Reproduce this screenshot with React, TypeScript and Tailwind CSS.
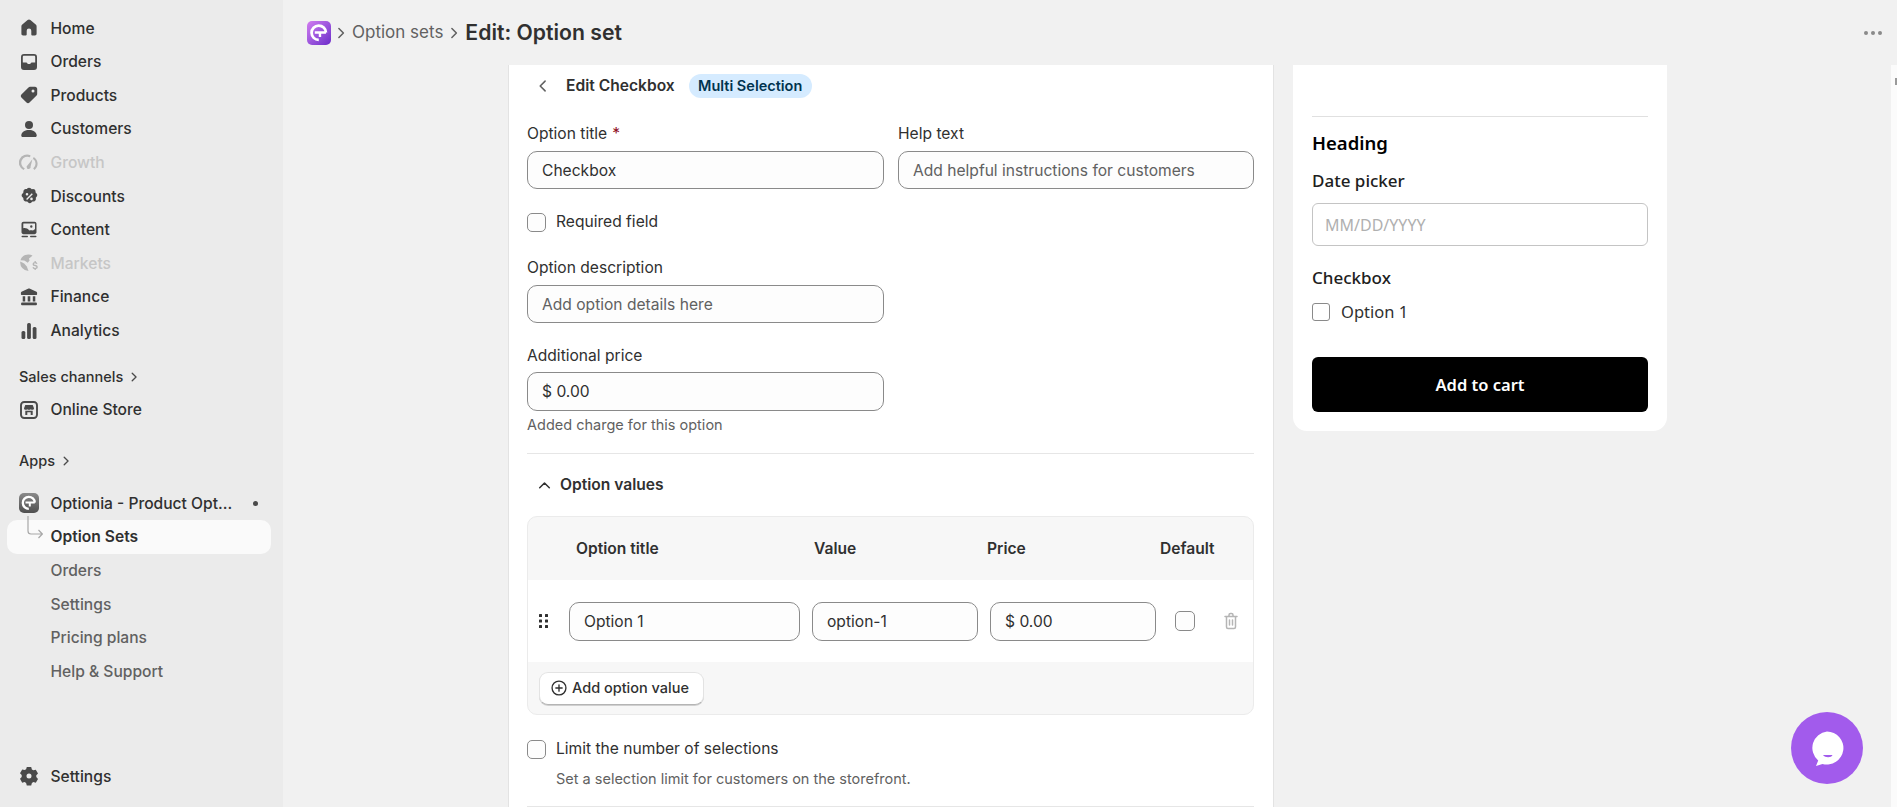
import React from "react";

const FONT = "font-['Inter','Noto_Sans',sans-serif]";

function Glyph({ children, cls = "text-[#4a4a4a]" }: { children: React.ReactNode; cls?: string }) {
  return (
    <svg viewBox="0 0 20 20" fill="currentColor" className={`w-[20px] h-[20px] shrink-0 ${cls}`}>
      {children}
    </svg>
  );
}

const icons: Record<string, React.ReactNode> = {
  home: <path d="M8.600 2.100a2.200 2.200 0 0 1 2.800 0l5.300 4.400c.6.500.9 1.100.9 1.800v7.500c0 1-.8 1.700-1.700 1.700h-2.700c-.5 0-.9-.4-.9-.9v-3.900a2.200 2.200 0 0 0-4.600 0v3.900c0 .5-.4.900-.9.900H4.100c-1 0-1.700-.8-1.700-1.700V8.300c0-.7.300-1.300.9-1.800z" />,
  orders: <path fillRule="evenodd" d="M5 2h10A3 3 0 0 1 18 5v10a3 3 0 0 1-3 3H5a3 3 0 0 1-3-3V5a3 3 0 0 1 3-3M3.800 5v5.500h3.400c.5 0 .8.200 1 .6l.5 1h2.600l.5-1c.2-.4.500-.6 1-.6h3.400V5c0-.7-.5-1.200-1.200-1.200H5c-.7 0-1.200.5-1.200 1.200" />,
  products: <path fillRule="evenodd" d="M11 1.800h5c1.200 0 2.200 1 2.200 2.200v5c0 .6-.2 1.100-.6 1.500l-7.100 7.100c-.8.800-2.200.8-3 0l-5.100-5.100c-.8-.8-.8-2.200 0-3l7.100-7.100c.4-.4 1-.6 1.500-.6M14 7.400a1.500 1.500 0 1 0 0-3 1.500 1.500 0 0 0 0 3" />,
  customers: (
    <>
      <circle cx="10" cy="6" r="4" />
      <path d="M10 11c-4 0-7 1.900-7.700 4.900-.3 1 .5 2.100 1.600 2.100h12.200c1.100 0 1.900-1.100 1.600-2.100C17 12.900 14 11 10 11" />
    </>
  ),
  growth: (
    <>
      <path d="M4.500 17A7.800 7.800 0 0 1 11.500 2.300l-.5 2A5.900 5.900 0 0 0 5.800 15.400z" />
      <path d="M14.800 4.100a7.800 7.800 0 0 1 .7 12.900l-1.300-1.600a5.900 5.900 0 0 0-.3-9.600z" />
      <path d="M13.400 6.200 11.600 13.500a2 2 0 1 1-3-1.200z" />
    </>
  ),
  discounts: (
    <path fillRule="evenodd" d="M8.300 1.400c.9-.8 2.500-.8 3.400 0l1 .9 1.400-.1c1.200 0 2.300.9 2.400 2.200l.1 1.300 1 1c.9.900.9 2.300 0 3.200l-.8.900.1 1.400c.1 1.200-.8 2.300-2.100 2.400l-1.400.1-1 1c-.9.900-2.300.9-3.200 0l-1-1-1.400-.1c-1.200 0-2.300-1-2.400-2.200l-.1-1.400-1-1c-.9-.9-.9-2.300 0-3.200l1-1 .1-1.300c.1-1.300 1.100-2.300 2.400-2.300l1.300-.1zM12.800 6.400l-5.700 5.700 1 1 5.700-5.700zM8 6a1.300 1.300 0 1 0 0 2.600A1.300 1.300 0 0 0 8 6m4.500 4.700a1.300 1.300 0 1 0 0 2.600 1.300 1.300 0 0 0 0-2.600" transform="translate(0 .9)" />
  ),
  content: (
    <>
      <path fillRule="evenodd" d="M4.500 1.800h11c1.100 0 2 .9 2 2v8.500c0 1-.9 1.900-2 1.900h-11c-1.100 0-2-.9-2-1.900V3.800c0-1.100.9-2 2-2M4.300 3.900v4.300c2-.6 4.200.2 6 2.200 1.200-.4 2.500-.3 3.700.2 1-.8 1.800-1.300 2-1.300V3.900c0-.2-.1-.3-.3-.3H4.600c-.2 0-.3.100-.3.300M12.300 5.300a1.200 1.200 0 1 0 0 2.400 1.200 1.200 0 0 0 0-2.400" />
      <rect x="2.500" y="15.800" width="6.500" height="1.500" rx=".7" />
      <rect x="11" y="15.800" width="6.500" height="1.500" rx=".7" />
    </>
  ),
  markets: (
    <>
      <path d="M9.500 1.500a8.300 8.300 0 0 1 4 1c-.7.800-1.700 1.800-2.800 2.400-.6.300-.9.900-.6 1.400l.6 1-1.900 2.500-3.500-2.200-3.900-.3A8.300 8.300 0 0 1 9.500 1.500" />
      <path d="M1.300 8.500l3.900 1.900 2.600 3.200 1.700 4.400A8.300 8.300 0 0 1 1.300 8.500" />
      <path d="M15.700 9.500c-1.600 0-2.700.9-2.700 2.100 0 2.600 3.800 1.500 3.800 2.900 0 .5-.5.800-1.200.8s-1.300-.3-1.500-.9l-1.300.4c.3.900 1 1.500 2.100 1.700v1h1.300v-1c1.200-.2 2-1 2-2.100 0-2.700-3.800-1.700-3.800-3 0-.4.400-.7 1-.7s1 .3 1.300.8l1.200-.6c-.3-.7-1-1.200-1.700-1.400v-1h-1.300v1z" transform="translate(.6 -.4)" />
    </>
  ),
  finance: (
    <path d="M9 1.800c.6-.3 1.400-.3 2 0l6.500 3c.4.200.6.600.6 1v1.500c0 .4-.3.700-.7.700H2.600a.7.700 0 0 1-.7-.7V5.800c0-.4.200-.8.600-1zM3.700 9.200h2.500v5.200H3.700zM8.700 9.200h2.600v5.200H8.700zM13.800 9.200h2.500v5.200h-2.500zM3 15.400h14c.5 0 .9.300.9.800v1.300c0 .4-.4.800-.9.800H3c-.5 0-.9-.4-.9-.8v-1.300c0-.5.4-.8.900-.8" />
  ),
  analytics: (
    <>
      <rect x="2.500" y="10" width="3.800" height="8" rx="1.500" />
      <rect x="8.100" y="2" width="3.800" height="16" rx="1.500" />
      <rect x="13.700" y="6" width="3.800" height="12" rx="1.500" />
    </>
  ),
  store: (
    <>
      <rect x="2" y="2" width="16" height="16" rx="3.200" fill="none" stroke="currentColor" strokeWidth="1.900" />
      <path d="M6.300 5h7.400l1.300 3.300c0 1-.8 1.500-1.700 1.500-.6 0-1.100-.2-1.500-.6-.4.400-1.200.6-1.800.6s-1.400-.2-1.800-.6c-.4.400-.9.600-1.500.6-.9 0-1.700-.5-1.700-1.500z" />
      <path d="M6.300 10.700V15h2v-2.800h3.400V15h2v-4.300" />
    </>
  ),
  settings: (
    <path fillRule="evenodd" d="M7.800 1.500h4.400l.7 2.400 1.500.9 2.400-.6 2.200 3.800-1.700 1.800v1.800l1.700 1.800-2.200 3.800-2.400-.6-1.500.9-.7 2.400H7.800l-.7-2.400-1.500-.9-2.400.6L1 13.200l1.700-1.800V9.600L1 7.800l2.200-3.800 2.400.6 1.500-.9zM10 8a2.500 2.500 0 1 0 0 5 2.500 2.500 0 0 0 0-5" transform="translate(0 -.5)" />
  ),
};

function Chevron({ cls = "" }: { cls?: string }) {
  return (
    <svg viewBox="0 0 10 10" fill="none" stroke="currentColor" strokeWidth="1.100" strokeLinecap="round" strokeLinejoin="round" className={cls}>
      <path d="M3.500 1.800 6.700 5 3.500 8.200" />
    </svg>
  );
}

function NavRow({ icon, label, muted }: { icon: string; label: string; muted?: boolean }) {
  return (
    <div className={`h-[33.6px] flex items-center pl-[19px] text-[15.6px] font-medium ${muted ? "text-[#c6c6c6]" : "text-[#303030]"}`}>
      <span className="w-[31.500px] flex">
        <Glyph cls={muted ? "text-[#b5b5b5]" : "text-[#4a4a4a]"}>{icons[icon]}</Glyph>
      </span>
      {label}
    </div>
  );
}

function SubRow({ label }: { label: string }) {
  return <div className="h-[33.6px] flex items-center pl-[50.500px] text-[15.6px] font-medium text-[#616161]">{label}</div>;
}

function SectionTitle({ label }: { label: string }) {
  return (
    <div className="flex items-center pl-[19px] h-[20px] text-[14.5px] font-medium text-[#303030]">
      {label}
      <Chevron cls="w-[12px] h-[12px] ml-[5px] text-[#4a4a4a]" />
    </div>
  );
}

function OptioniaLogo({ size, gray }: { size: number; gray?: boolean }) {
  const bg = gray ? "bg-gradient-to-b from-[#8a8a8a] to-[#4f4f4f]" : "bg-gradient-to-br from-[#d37cf0] to-[#6d28c9]";
  return (
    <span className={`flex items-center justify-center rounded-[5px] shrink-0 ${bg}`} style={{ width: size, height: size }}>
      <svg viewBox="0 0 20 20" style={{ width: size, height: size }}>
        <path d="M15.800 9.600A6 6 0 1 0 9.800 15.800" fill="none" stroke="#fff" strokeWidth="2.300" />
        <path d="M6.500 9.600h9.300M10.800 9.600v3.800" stroke="#fff" strokeWidth="2" fill="none" />
      </svg>
    </span>
  );
}

function Sidebar() {
  return (
    <aside className="w-[283px] h-full shrink-0 bg-[#ebebeb] flex flex-col pt-[11.500px]">
      <NavRow icon="home" label="Home" />
      <NavRow icon="orders" label="Orders" />
      <NavRow icon="products" label="Products" />
      <NavRow icon="customers" label="Customers" />
      <NavRow icon="growth" label="Growth" muted />
      <NavRow icon="discounts" label="Discounts" />
      <NavRow icon="content" label="Content" />
      <NavRow icon="markets" label="Markets" muted />
      <NavRow icon="finance" label="Finance" />
      <NavRow icon="analytics" label="Analytics" />
      <div className="mt-[19.500px]">
        <SectionTitle label="Sales channels" />
      </div>
      <div className="mt-[6px]">
        <NavRow icon="store" label="Online Store" />
      </div>
      <div className="mt-[24px]">
        <SectionTitle label="Apps" />
      </div>
      <div className="mt-[16px] h-[33.6px] flex items-center pl-[19px] text-[15.6px] font-medium text-[#303030]">
        <span className="w-[31.500px] flex">
          <OptioniaLogo size={20} gray />
        </span>
        Optionia - Product Opt...
        <span className="ml-[21px] w-[5px] h-[5px] rounded-full bg-[#4a4a4a]" />
      </div>
      <div className="relative mx-[7px] w-[264px] h-[34px] bg-[#fafafa] rounded-[10px] flex items-center pl-[43.500px] text-[15.6px] font-semibold text-[#303030]">
        Option Sets
        <svg viewBox="0 0 16 24" fill="none" stroke="#a8a8a8" strokeWidth="1.200" className="absolute left-[20px] top-[-4px] w-[16px] h-[24px]">
          <path d="M1 0v15c0 2 1 3 3 3h11M11.500 14l3.800 4-3.800 4" />
        </svg>
      </div>
      <SubRow label="Orders" />
      <SubRow label="Settings" />
      <SubRow label="Pricing plans" />
      <SubRow label="Help & Support" />
      <div className="mt-auto mb-[14px]">
        <NavRow icon="settings" label="Settings" />
      </div>
    </aside>
  );
}

function TextInput({ value, placeholder, cls = "h-[38px]" }: { value?: string; placeholder?: string; cls?: string }) {
  return (
    <input
      readOnly
      value={value}
      placeholder={placeholder}
      className={`w-full ${cls} rounded-[10px] border border-[#8a8a8a] bg-[#fdfdfd] px-[14px] text-[15.6px] text-[#303030] placeholder:text-[#616161] outline-none`}
    />
  );
}

function Check({ cls = "w-[19px] h-[19px]" }: { cls?: string }) {
  return <span className={`block shrink-0 rounded-[5px] border border-[#8a8a8a] bg-[#fdfdfd] ${cls}`} />;
}

function Label({ children }: { children: React.ReactNode }) {
  return <div className="h-[20px] flex items-center text-[15.6px] text-[#303030]">{children}</div>;
}

function EditorCard() {
  return (
    <section className="w-[766px] shrink-0 bg-white pl-[18px] pr-[19px] border-x border-[#e3e3e3] h-[800px]">
      <div className="h-[28px] mt-[7px] flex items-center">
        <svg viewBox="0 0 10 10" fill="none" stroke="#616161" strokeWidth="1.100" strokeLinecap="round" strokeLinejoin="round" className="w-[14px] h-[14px] ml-[9px]">
          <path d="M6.500 1.500 3 5l3.500 3.500" />
        </svg>
        <span className="ml-[16px] text-[15.6px] font-semibold text-[#303030]">Edit Checkbox</span>
        <span className="ml-[14px] w-[123px] h-[24px] rounded-full bg-[#d5ebff] flex items-center justify-center text-[14.5px] font-semibold text-[#00334f]">Multi Selection</span>
      </div>
      <div className="grid grid-cols-[357px_356px] gap-x-[14px] mt-[24px]">
        <div>
          <Label>
            Option title <span className="ml-[5px] text-[#8e0b21]">*</span>
          </Label>
          <div className="mt-[7px]">
            <TextInput value="Checkbox" />
          </div>
        </div>
        <div>
          <Label>Help text</Label>
          <div className="mt-[7px]">
            <TextInput placeholder="Add helpful instructions for customers" />
          </div>
        </div>
      </div>
      <div className="mt-[23px] h-[20px] flex items-center gap-[10px] text-[15.6px] text-[#303030]">
        <Check />
        Required field
      </div>
      <div className="w-[357px] mt-[26px]">
        <Label>Option description</Label>
        <div className="mt-[7px]">
          <TextInput placeholder="Add option details here" />
        </div>
      </div>
      <div className="w-[357px] mt-[23px]">
        <Label>Additional price</Label>
        <div className="mt-[6px]">
          <TextInput value="$ 0.00" cls="h-[39px]" />
        </div>
        <div className="h-[20px] mt-[4px] flex items-center text-[14.5px] text-[#616161]">Added charge for this option</div>
      </div>
      <div className="h-px bg-[#e6e6e6] mt-[18px]" />
      <div className="h-[20px] mt-[21px] flex items-center text-[15.6px] font-semibold text-[#303030]">
        <svg viewBox="0 0 10 10" fill="none" stroke="#303030" strokeWidth="1" strokeLinecap="round" strokeLinejoin="round" className="w-[15px] h-[15px] ml-[10px] mr-[8px]">
          <path d="M1.800 6.500 5 3.300l3.200 3.200" />
        </svg>
        Option values
      </div>
      <div className="mt-[21px] rounded-[10px] border border-[#ebebeb] bg-[#f7f7f7] overflow-hidden">
        <div className="h-[63px] grid grid-cols-[238px_173px_173px_1fr] items-center pl-[48px] text-[15.6px] font-semibold text-[#303030]">
          <span>Option title</span>
          <span>Value</span>
          <span>Price</span>
          <span>Default</span>
        </div>
        <div className="h-[82px] bg-white flex items-center pl-[11px]">
          <svg viewBox="0 0 10 16" fill="#303030" className="w-[10px] h-[16px] shrink-0">
            <rect x="0" y="1" width="3" height="3" rx=".6" />
            <rect x="6" y="1" width="3" height="3" rx=".6" />
            <rect x="0" y="6.500" width="3" height="3" rx=".6" />
            <rect x="6" y="6.500" width="3" height="3" rx=".6" />
            <rect x="0" y="12" width="3" height="3" rx=".6" />
            <rect x="6" y="12" width="3" height="3" rx=".6" />
          </svg>
          <div className="w-[231px] ml-[20px]">
            <TextInput value="Option 1" cls="h-[39px]" />
          </div>
          <div className="w-[166px] ml-[12px]">
            <TextInput value="option-1" cls="h-[39px]" />
          </div>
          <div className="w-[166px] ml-[12px]">
            <TextInput value="$ 0.00" cls="h-[39px]" />
          </div>
          <Check cls="w-[20px] h-[20px] ml-[19px]" />
          <svg viewBox="0 0 20 20" fill="none" stroke="#b5b5b5" strokeWidth="1.500" strokeLinecap="round" strokeLinejoin="round" className="w-[20px] h-[20px] ml-[26px]">
            <path d="M4 5.500h12M8 5.500V4a1.500 1.500 0 0 1 1.500-1.500h1A1.500 1.500 0 0 1 12 4v1.500M5.500 5.500V16c0 .8.700 1.500 1.500 1.500h6c.8 0 1.500-.7 1.500-1.500V5.500M8.500 9v5M11.500 9v5" />
          </svg>
        </div>
        <div className="h-[52px] flex items-center pl-[11px]">
          <button className="w-[165px] h-[33px] rounded-[9px] bg-white border border-[#e3e3e3] border-b-[#b5b5b5] shadow-[0_1px_0_#d0d0d0] flex items-center pl-[10px] gap-[4px] text-[14.5px] font-medium text-[#303030]">
            <svg viewBox="0 0 20 20" fill="none" stroke="#303030" strokeWidth="1.500" strokeLinecap="round" className="w-[18px] h-[18px] shrink-0">
              <circle cx="10" cy="10" r="7.700" />
              <path d="M10 6.500v7M6.500 10h7" />
            </svg>
            Add option value
          </button>
        </div>
      </div>
      <div className="mt-[24px] h-[20px] flex items-center gap-[10px] text-[15.6px] text-[#303030]">
        <Check />
        Limit the number of selections
      </div>
      <div className="mt-[10px] h-[20px] pl-[29px] flex items-center text-[14.5px] text-[#616161]">Set a selection limit for customers on the storefront.</div>
      <div className="h-px bg-[#e6e6e6] mt-[17px]" />
    </section>
  );
}

function PreviewCard() {
  return (
    <section className="w-[374px] shrink-0 ml-[19px] h-[366px] bg-white rounded-b-[14px] px-[19px] pt-[51px]">
      <div className="h-px bg-[#e0e0e0]" />
      <div className="h-[24px] mt-[14px] flex items-center text-[18.500px] font-semibold text-black font-['Noto_Sans',sans-serif]">Heading</div>
      <div className="h-[24px] mt-[14px] flex items-center text-[17px] font-medium text-[#202020] font-['Noto_Sans',sans-serif]">Date picker</div>
      <input
        readOnly
        placeholder="MM/DD/YYYY"
        className="mt-[10px] w-full h-[43px] rounded-[6px] border border-[#c4c4c4] bg-white px-[12px] text-[16px] placeholder:text-[#b0b0b0] outline-none font-['Noto_Sans',sans-serif]"
      />
      <div className="h-[24px] mt-[20px] flex items-center text-[17px] font-medium text-[#202020] font-['Noto_Sans',sans-serif]">Checkbox</div>
      <div className="mt-[10px] h-[24px] flex items-center gap-[11px] text-[16.5px] text-[#303030] font-['Noto_Sans',sans-serif]">
        <span className="block w-[18px] h-[18px] rounded-[3px] border border-[#8a8a8a]" />
        Option 1
      </div>
      <button className="mt-[33px] w-full h-[55px] pt-[2px] rounded-[6px] bg-black text-white text-[16.5px] font-semibold font-['Noto_Sans',sans-serif]">Add to cart</button>
    </section>
  );
}

export default function App() {
  return (
    <div className={`${FONT} relative w-[1897px] h-[807px] overflow-hidden flex bg-[#f1f1f1]`}>
      <Sidebar />
      <main className="flex-1 min-w-0 flex flex-col">
        <header className="h-[65px] shrink-0 flex items-center pl-[24px] pr-[15px]">
          <OptioniaLogo size={24} />
          <Chevron cls="w-[14px] h-[14px] ml-[3px] text-[#616161]" />
          <span className="ml-[4px] text-[17px] text-[#616161]">Option sets</span>
          <Chevron cls="w-[14px] h-[14px] ml-[4px] text-[#616161]" />
          <span className="ml-[4px] text-[21.200px] font-semibold text-[#303030]">Edit: Option set</span>
          <span className="ml-auto flex gap-[3px]">
            <i className="w-[4px] h-[4px] rounded-full bg-[#8a8a8a]" />
            <i className="w-[4px] h-[4px] rounded-full bg-[#8a8a8a]" />
            <i className="w-[4px] h-[4px] rounded-full bg-[#8a8a8a]" />
          </span>
        </header>
        <div className="flex pl-[225px] flex-1 min-h-0">
          <EditorCard />
          <PreviewCard />
          <div className="ml-auto w-[6px] h-full bg-[#fbfbfb] flex justify-end pt-[13px]">
            <span className="block w-[2px] h-[7px] bg-[#9a9a9a]" />
          </div>
        </div>
      </main>
      <div className="absolute left-[1791px] top-[712px] w-[72px] h-[72px] rounded-full bg-[#a25bec] flex items-center justify-center">
        <svg viewBox="0 0 40 40" className="w-[40px] h-[40px]">
          <path d="M20 3.500a16.500 16.500 0 1 1-4.500 32.400L9 38l2.200-5.500A16.500 16.500 0 0 1 20 3.500" fill="#fff" />
          <path d="M16 27h9.500c-1 3-7.500 3-9.500 0" fill="#a25bec" />
        </svg>
      </div>
    </div>
  );
}
